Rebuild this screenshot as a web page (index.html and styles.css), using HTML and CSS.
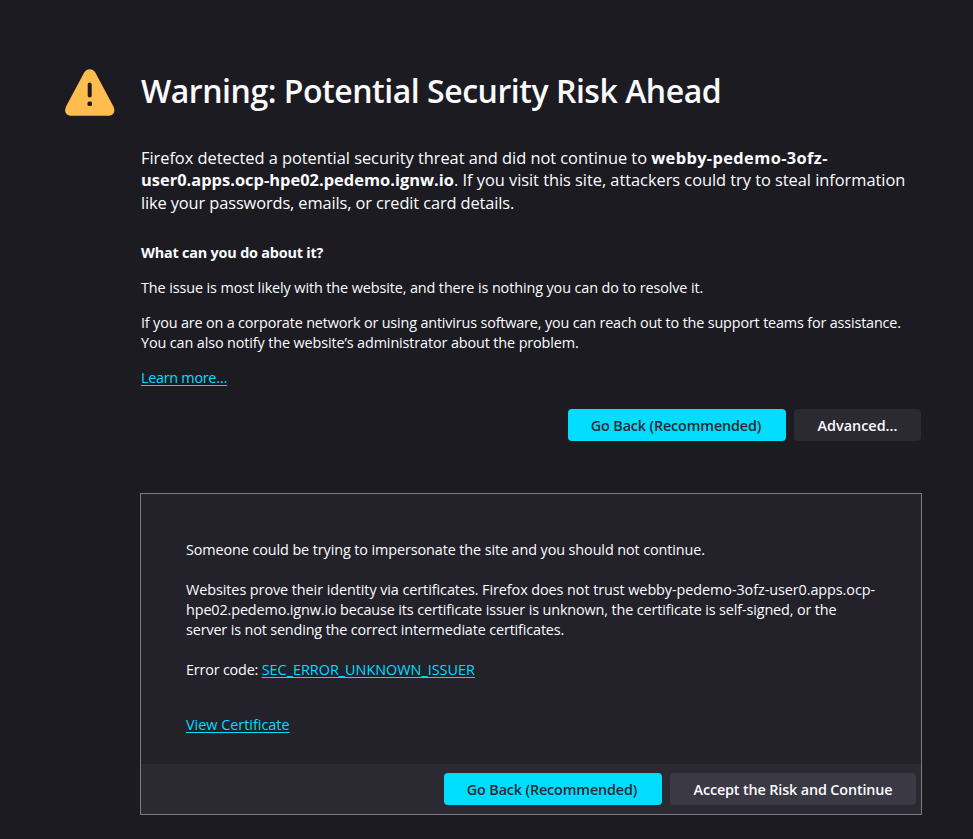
FILE: index.html
```html
<!DOCTYPE html>
<html lang="en">
<head>
<meta charset="utf-8">
<title>Warning: Potential Security Risk Ahead</title>
<link rel="stylesheet" href="styles.css">
</head>
<body>
<main class="page">
  <header class="heading">
    <svg class="warning" viewBox="0 0 50 48" aria-hidden="true"><path fill="#ffbd4f" d="M19.200 3.500C21.800-1 27.700-1 30.300 3.500L48.200 37C51 42.300 48.500 46.700 43 46.700H6.500C1 46.700-1.500 42.300 1.300 37Z"/><path stroke="#1c1b22" stroke-width="4" stroke-linecap="round" d="M24.700 15.500V26.500"/><rect x="22.500" y="32.500" width="4.500" height="4.500" rx="1.500" fill="#1c1b22"/></svg>
    <h1>Warning: Potential Security Risk Ahead</h1>
  </header>
  <section class="intro">
    <p class="lead"><span class="l1">Firefox detected a potential security threat and did not continue to <b class="host-start">webby-pedemo-3ofz-</b></span><br><span class="l2"><b class="host-end">user0.apps.ocp-hpe02.pedemo.ignw.io</b>. If you visit this site, attackers could try to steal information</span><br><span class="l3">like your passwords, emails, or credit card details.</span></p>
    <h2>What can you do about it?</h2>
    <p class="l5">The issue is most likely with the website, and there is nothing you can do to resolve it.</p>
    <p><span class="l6">If you are on a corporate network or using antivirus software, you can reach out to the support teams for assistance.</span><br><span class="l7">You can also notify the website’s administrator about the problem.</span></p>
    <p><a class="l8" href="#">Learn more…</a></p>
  </section>
  <div class="actions"><button class="primary">Go Back (Recommended)</button><button class="advanced">Advanced...</button></div>
  <section class="panel">
    <div class="details">
      <p class="l9">Someone could be trying to impersonate the site and you should not continue.</p>
      <p><span class="l10">Websites prove their identity via certificates. Firefox does not trust webby-pedemo-3ofz-user0.apps.ocp-</span><br><span class="l11">hpe02.pedemo.ignw.io because its certificate issuer is unknown, the certificate is self-signed, or the</span><br><span class="l12">server is not sending the correct intermediate certificates.</span></p>
      <p class="code"><span class="l13">Error code: </span><a class="l14" href="#">SEC_ERROR_UNKNOWN_ISSUER</a></p>
      <p><a href="#">View Certificate</a></p>
    </div>
    <footer><button class="primary">Go Back (Recommended)</button><button class="accept">Accept the Risk and Continue</button></footer>
  </section>
</main>
</body>
</html>
```
FILE: styles.css
```css
* { box-sizing: border-box; }
body { margin: 0; background: #1c1b22; color: #fbfbfe; font: 14.4px/20px "Open Sans", "Noto Sans", sans-serif; }
.page { width: 922px; padding: 69px 0 0 65px; }
.heading { display: flex; gap: 26px; height: 77.7px; }
.warning { width: 50px; height: 48px; }
h1 { margin: 0; font-size: 32px; font-weight: 600; line-height: 43px; white-space: nowrap; letter-spacing: -.47px; }
.intro { margin-left: 76px; white-space: nowrap; }
p { margin: 0 0 15px; }
.lead { font-size: 16.4px; line-height: 22.5px; margin-bottom: 28.8px; }
h2 { margin: 0 0 15px; font-size: 14.4px; line-height: 20px; letter-spacing: -.19px; }
a { color: #00ddff; text-decoration: underline; text-underline-offset: 2px; text-decoration-skip-ink: none; }
.actions { display: flex; justify-content: flex-end; gap: 8px; margin-top: 21.1px; padding-right: 1px; }
button { height: 32px; padding: 2px 0 0; border: 0; border-radius: 4px; background: #2b2a33; color: #fbfbfe; font: 600 14.4px/20px "Open Sans", sans-serif; letter-spacing: -.15px; white-space: nowrap; }
.primary { width: 218px; padding-right: 2px; background: #00ddff; color: #2b2a33; }
.advanced { width: 127px; letter-spacing: 0; }
.panel { margin: 52px 0 0 75px; height: 322px; border: 1px solid #7b7b82; background: #23222b; }
.details { height: 270px; padding: 46px 45px 0; white-space: nowrap; }
.details p { margin-bottom: 20px; }
.details .code { margin-bottom: 35px; }
.panel footer { height: 50px; padding: 9px 5px 0 0; display: flex; justify-content: flex-end; gap: 8px; background: #2b2a33; }
.accept { width: 246px; background: #3a3944; }

.l1 { letter-spacing: -.03px; }
.host-start { letter-spacing: .38px; }
.l2 { letter-spacing: -.035px; }
.host-end { letter-spacing: .03px; }
.l3 { letter-spacing: -.115px; }
.l5 { letter-spacing: -.105px; }
.l6 { letter-spacing: -.163px; }
.l7 { letter-spacing: -.12px; }
.l8 { letter-spacing: -.28px; }
.l9 { letter-spacing: -.1px; }
.l10 { letter-spacing: -.07px; }
.l11 { letter-spacing: -.125px; }
.l12 { letter-spacing: -.147px; }
.l13 { letter-spacing: -.19px; }
```
